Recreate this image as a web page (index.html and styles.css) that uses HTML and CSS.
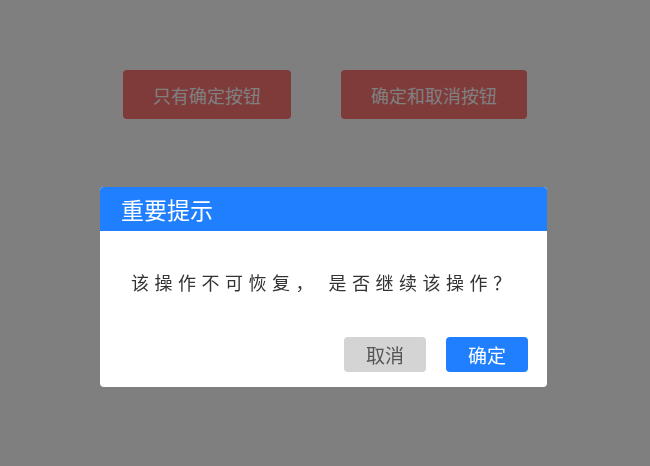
FILE: index.html
```html
<!DOCTYPE html>
<html lang="zh-CN">
<head>
    <meta charset="UTF-8">
    <meta name="viewport" content="width=device-width, initial-scale=1.0">
    <title>弹窗示例</title>
<link rel="stylesheet" href="styles.css">
</head>
<body>
    <!-- 页面按钮 -->
    <div class="demo-buttons">
        <button class="demo-btn btn-one">只有确定按钮</button>
        <button class="demo-btn btn-two">确定和取消按钮</button>
    </div>

    <!-- 遮罩和对话框 -->
    <div class="mask">
        <div class="dialog">
            <div class="dialog-title">重要提示</div>
            <div class="dialog-body">该操作不可恢复， 是否继续该操作？</div>
            <div class="dialog-footer">
                <button class="dlg-btn dlg-cancel">取消</button>
                <button class="dlg-btn dlg-ok">确定</button>
            </div>
        </div>
    </div>
</body>
</html>
```

FILE: styles.css
```css
body {
    margin: 0;
    font-family: "Noto Sans CJK SC", "Liberation Sans", sans-serif;
    background-color: #fff;
    height: 466px;
}

.demo-buttons {
    display: flex;
    justify-content: center;
    gap: 50px;
    padding-top: 70px;
}

.demo-btn {
    height: 49px;
    border: none;
    border-radius: 4px;
    background-color: #ff7474;
    color: #fff;
    font-family: inherit;
    font-size: 18px;
    cursor: pointer;
}

.btn-one {
    width: 168px;
}

.btn-two {
    width: 186px;
}

.mask {
    position: fixed;
    left: 0;
    top: 0;
    right: 0;
    bottom: 0;
    background-color: rgba(0, 0, 0, 0.5);
    display: flex;
    justify-content: center;
    align-items: flex-start;
    padding-top: 187px;
    padding-right: 3px;
}

.dialog {
    width: 447px;
    background-color: #fff;
    border-radius: 4px;
    overflow: hidden;
}

.dialog-title {
    height: 44px;
    line-height: 44px;
    background-color: #1f7ffe;
    color: #fff;
    font-size: 23px;
    padding-left: 21px;
}

.dialog-body {
    padding: 39px 0 0 31px;
    font-size: 18px;
    line-height: 24px;
    letter-spacing: 5.5px;
    color: #333;
}

.dialog-footer {
    display: flex;
    justify-content: flex-end;
    gap: 20px;
    padding: 43px 19px 15px;
}

.dlg-btn {
    width: 82px;
    height: 35px;
    border: none;
    border-radius: 4px;
    font-family: inherit;
    font-size: 19px;
    cursor: pointer;
}

.dlg-cancel {
    background-color: #d4d4d4;
    color: #555;
}

.dlg-ok {
    background-color: #1f7ffe;
    color: #fff;
}
```
